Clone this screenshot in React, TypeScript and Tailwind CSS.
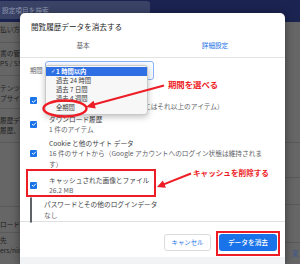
import React from 'react';

const jp = "font-['Noto_Sans_CJK_JP','Noto_Sans',sans-serif]";

interface Row {
  lines: string[];
  checked: boolean;
  mt: string;
}

const rows: Row[] = [
  { lines: ['閲覧履歴', '19 件のアイテム（同期デバイスにはそれ以上のアイテム）'], checked: true, mt: 'mt-[10px]' },
  { lines: ['ダウンロード履歴', '1 件のアイテム'], checked: true, mt: 'mt-[2.5px]' },
  {
    lines: ['Cookie と他のサイト データ', '16 件のサイトから（Google アカウントへのログイン状態は維持されま', 'す）'],
    checked: true,
    mt: 'mt-[3px]',
  },
  { lines: ['キャッシュされた画像とファイル', '26.2 MB'], checked: true, mt: 'mt-[5.5px]' },
  { lines: ['パスワードとその他のログインデータ', 'なし'], checked: false, mt: 'mt-[2px]' },
];

const periods = ['1 時間以内', '過去 24 時間', '過去 7 日間', '過去 4 週間', '全期間'];

function Checkbox({ on }: { on: boolean }) {
  if (!on) return <span className="h-[7px] w-[7px] shrink-0 rounded-[1px] border border-[#5f6368]" />;
  return (
    <span className="flex h-[7px] w-[7px] shrink-0 items-center justify-center rounded-[1px] bg-[#1a73e8]">
      <svg width="6" height="6" viewBox="0 0 12 12">
        <path d="M2.2 6.2l2.6 2.6 5-5.4" stroke="white" strokeWidth="1.9" fill="none" />
      </svg>
    </span>
  );
}

export default function App() {
  return (
    <div className={`relative h-[264px] w-[300px] overflow-hidden bg-[#666666] ${jp}`}>
      {/* dimmed settings page behind the dialog */}
      <div className="flex h-[22px] items-start bg-[#1b2350]">
        <div className="mt-[1px] flex h-[18px] w-[150px] items-center rounded-r-[3px] bg-[#3a4366] pl-[2px] text-[6.7px] text-[#8e96b0]">
          設定項目を検索
        </div>
      </div>
      <div className="flex h-[242px]">
        <div className="flex w-[60px] flex-col text-[6.7px] leading-[10px] text-[#222222] whitespace-nowrap">
          <div className="h-[21px] border-b border-[#595959] pt-[2px]">払い方法</div>
          <div className="h-[33px] border-b border-[#595959] pt-[5px]">
            <div>書の管理</div>
            <div>PS / SSL</div>
          </div>
          <div className="h-[33px] border-b border-[#595959] pt-[7px]">
            <div>テンツの設定</div>
            <div>プサイトの許可</div>
          </div>
          <div className="h-[34px] border-b border-[#595959] pt-[6px]">
            <div>履歴データ</div>
            <div>履歴、Cookie</div>
          </div>
          <div className="h-[64px] border-b border-[#595959]" />
          <div className="h-[26px] border-b border-[#595959] pt-[12px]">ロード</div>
          <div className="pt-[2px]">
            <div>先</div>
            <div>ers/niri</div>
          </div>
        </div>
        <div className="flex-1" />
        <div className="flex w-[20px] flex-col text-[6.7px] leading-[10px]">
          <div className="h-[121px] border-b border-[#595959]" />
          <div className="h-[35px] border-b border-[#595959]" />
          <div className="h-[27px] border-b border-[#595959]" />
          <div className="h-[38px] border-b border-[#595959]" />
          <div className="pl-[12px] pt-[5px] whitespace-nowrap text-[#3a5690]">変</div>
        </div>
      </div>

      {/* dialog */}
      <div className="absolute left-[20px] top-[13px] flex h-[251px] w-[265px] flex-col rounded-t-[5px] bg-white shadow-[0_2px_10px_rgba(0,0,0,0.45)]">
        <div className="h-[19px] pl-[11px] pt-[9px] text-[7.6px] leading-[10px] text-[#202124]">
          閲覧履歴データを消去する
        </div>
        <div className="flex h-[26px] items-center border-b border-[#e3e3e3] text-[6.6px] leading-[10px]">
          <div className="w-[126px] text-center text-[#5f6368]">基本</div>
          <div className="w-[138px] text-center text-[#1a73e8]">詳細設定</div>
        </div>
        <div className="flex h-[164px] flex-col border-b border-[#e0e0e0]">
          <div className="mt-[3px] flex h-[19px] items-center">
            <span className="w-[25px] pl-[10px] text-[6.3px] leading-[10px] whitespace-nowrap text-[#5f6368]">期間</span>
            <div className="h-[19px] w-[109px] rounded-[3px] border border-[#8ab4f8] bg-[#f8fbff]" />
          </div>
          {rows.map((r, i) => (
            <div key={i} className={`flex items-center ${r.mt}`}>
              <span className="ml-[10px]">
                <Checkbox on={r.checked} />
              </span>
              <div className="ml-[12px] text-[6.7px] leading-[10.5px] whitespace-nowrap">
                {r.lines.map((l, j) => (
                  <div key={j} className={j === 0 ? 'text-[#3c4043]' : 'text-[#5f6368]'}>
                    {l}
                  </div>
                ))}
              </div>
            </div>
          ))}
        </div>
        <div className="flex h-[35px] items-start justify-end gap-[8px] pr-[8px] pt-[12px]">
          <button className="flex h-[17px] w-[47px] items-center justify-center rounded-[3px] border border-[#dadce0] text-[6.4px] text-[#1a73e8]">
            キャンセル
          </button>
          <button className="flex h-[17px] w-[58px] items-center justify-center rounded-[3px] bg-[#1a73e8] text-[6.7px] font-medium text-white">
            データを消去
          </button>
        </div>
        <div className="flex-1 bg-[#f1f3f4]" />
      </div>

      {/* open select list */}
      <div className="absolute left-[45px] top-[65px] w-[103px] rounded-[3px] border border-[#c9c9c9] bg-[#f7f7f7] pb-[2px] pt-[1px] shadow-[0_2px_6px_rgba(0,0,0,0.25)]">
        {periods.map((p, i) => (
          <div
            key={p}
            className={`flex h-[9px] items-center text-[6.3px] leading-[9px] whitespace-nowrap ${
              i === 0 ? 'bg-[#2f6fe4] font-semibold text-white' : 'text-[#3a3a3a]'
            }`}
          >
            <span className="w-[10px] pl-[5px] font-['DejaVu_Sans',sans-serif] text-[5.5px]">{i === 0 ? '✓' : ''}</span>
            {p}
          </div>
        ))}
      </div>

      {/* annotations */}
      <svg className="pointer-events-none absolute left-0 top-0" width="300" height="264" viewBox="0 0 300 264">
        <ellipse cx="65" cy="108.5" rx="21.5" ry="8" fill="none" stroke="#ee1c25" strokeWidth="2.4" />
        <line x1="164" y1="85.5" x2="93" y2="104.8" stroke="#ee1c25" strokeWidth="2" />
        <polygon points="86,107 95.8,108.5 93.6,100.7" fill="#ee1c25" />
        <rect x="27" y="170" width="128" height="26" fill="none" stroke="#ee1c25" strokeWidth="2" />
        <line x1="191" y1="173.5" x2="163" y2="184.6" stroke="#ee1c25" strokeWidth="2" />
        <polygon points="157,187 165.9,187.8 162.9,180.4" fill="#ee1c25" />
        <rect x="217" y="232" width="62" height="23" fill="none" stroke="#ee1c25" strokeWidth="2" />
      </svg>
      <span className="absolute left-[168px] top-[79px] text-[8.4px] font-bold leading-[10px] whitespace-nowrap text-[#ee1c25]">
        期間を選べる
      </span>
      <span className="absolute left-[193px] top-[168px] text-[7.6px] font-bold leading-[10px] whitespace-nowrap text-[#ee1c25]">
        キャッシュを削除する
      </span>
    </div>
  );
}
